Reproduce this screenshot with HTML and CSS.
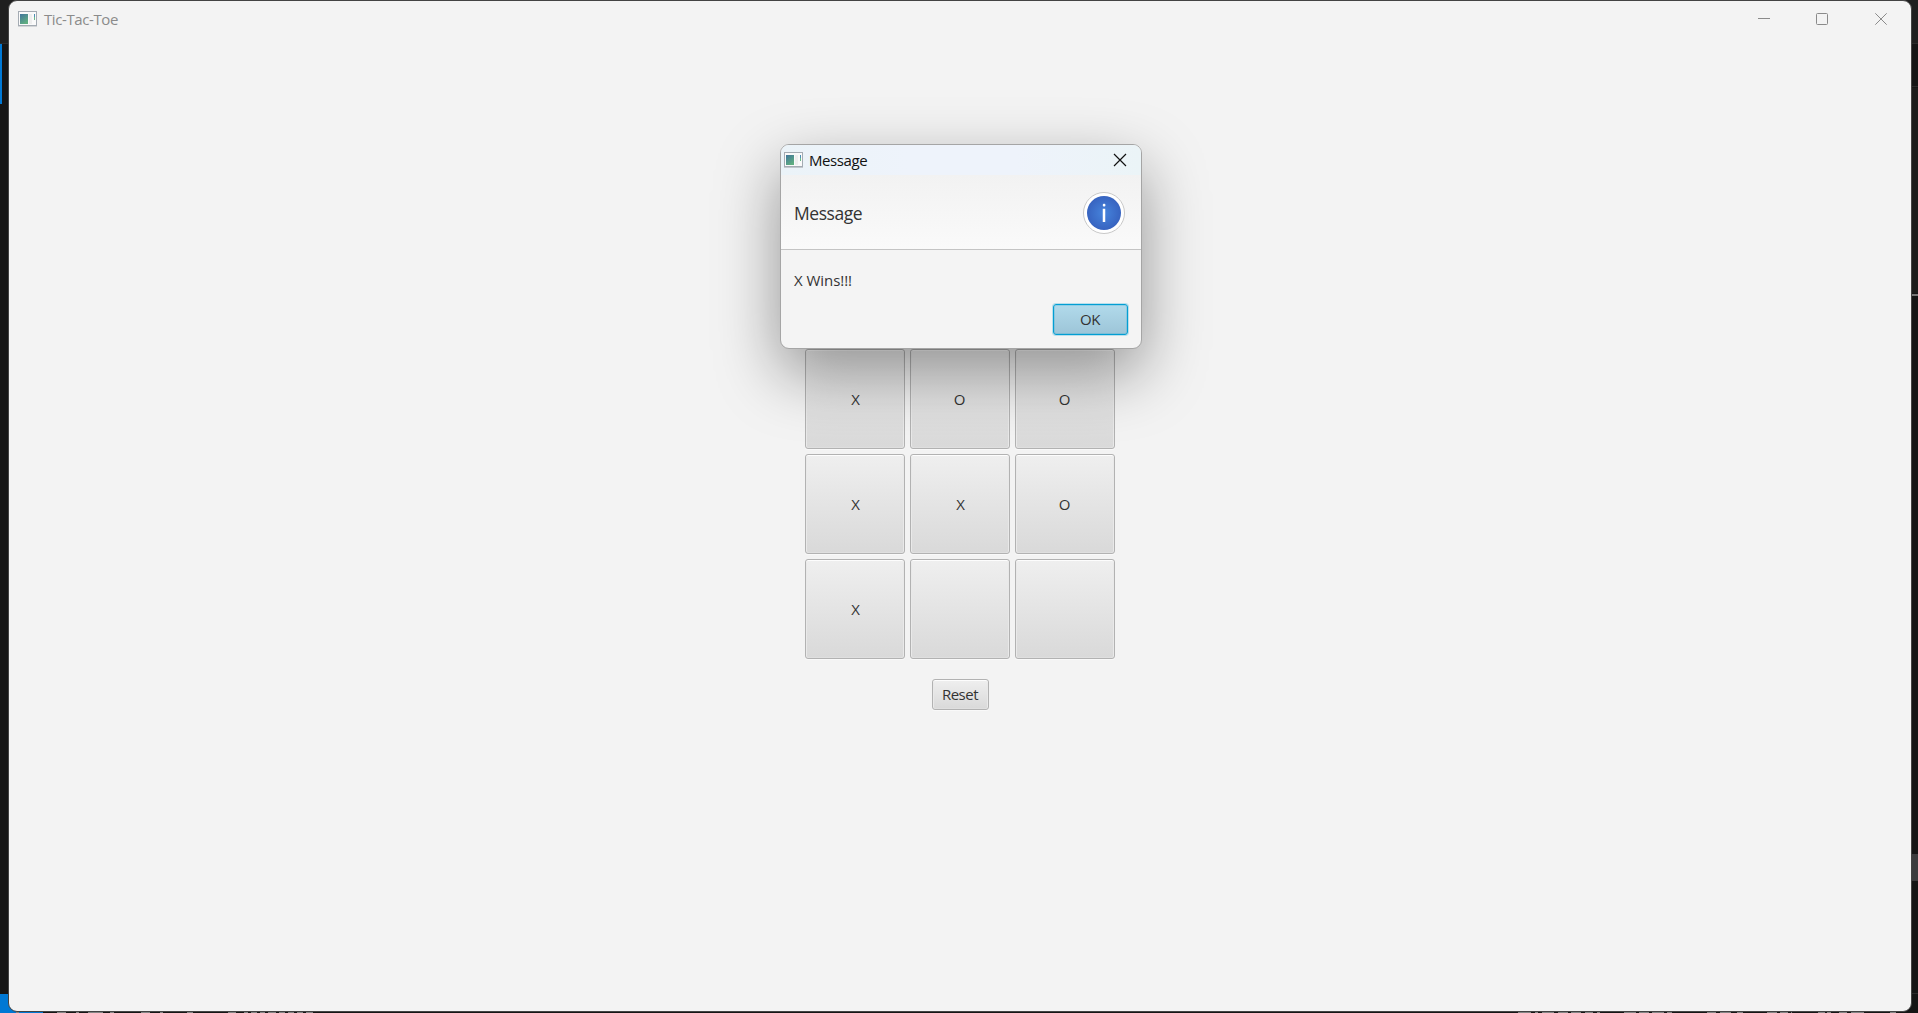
FILE: index.html
```html
<!DOCTYPE html>
<html lang="en">
<head>
<meta charset="utf-8">
<title>Tic-Tac-Toe</title>
<link rel="stylesheet" href="styles.css">
</head>
<body>
<svg class="backdrop" width="1918" height="1013" viewBox="0 0 1918 1013" aria-hidden="true">
  <rect width="1918" height="1013" fill="#151515"/>
  <rect width="1918" height="43" fill="#1f1f1f"/>
  <path d="M0 43.5H1918M1900 86.500H1918M1900 993.500H1918" stroke="#2b2b2b"/>
  <rect y="44" width="2" height="60" fill="#0078d4"/>
  <rect x="1905" y="88" width="13" height="205" fill="#1c1c1b"/>
  <rect x="1905" y="294" width="13" height="2" fill="#777"/>
  <rect x="1905" y="854" width="13" height="27" fill="#3b3b3d"/>
  <rect y="994" width="43" height="19" fill="#0078d4"/>
  <path d="M16 1012h3M57 1012h9M76 1012h3M88 1012h15M110 1012h4M141 1012h9M160 1012h3M187 1012h6M228 1012h8M244 1012h4m3 0h6m3 0h5m3 0h8m3 0h6m3 0h6m3 0h6m3 0h7M1518 1012h13m4 0h3m4 0h12m4 0h10m3 0h10m4 0h8m4 0h3M1624 1012h12m3 0h10m3 0h12m3 0h5M1707 1012h9m4 0h11m6 0h6M1767 1012h10m3 0h8m3 0h1M1818 1012h7m2 0h4m8 0h8m4 0h13M1890 1012h6" stroke="#858585" stroke-width="2"/>
</svg>

<main class="window">
  <header class="titlebar">
    <svg class="app-icon" width="19" height="16" viewBox="0 0 19 16">
      <defs><linearGradient id="pane" x2=".6" y2="1"><stop stop-color="#40759c"/><stop offset="1" stop-color="#60ae80"/></linearGradient></defs>
      <rect x=".5" y=".5" width="18" height="14" fill="#fafafa" stroke="#a4abb3"/>
      <path d="M0 15.500H19" stroke="#d3d5d7"/>
      <rect x="2" y="3" width="8" height="10" fill="url(#pane)"/>
      <rect x="11" y="3" width="3" height="10" fill="#eeeeee"/>
      <path d="M16.500 3V6" stroke="#4d8fb4"/><path d="M16.500 6V9" stroke="#6ab989"/>
    </svg>
    <span class="title">Tic-Tac-Toe</span>
    <svg class="controls" width="130" height="14" viewBox="0 0 130 14" fill="none" stroke="#8a8a8a">
      <path d="M0 6.500H12"/>
      <rect x="58.500" y="1.500" width="11" height="11" rx="1"/>
      <path d="M117.300 1.300L128.700 12.700M128.700 1.300L117.300 12.700"/>
    </svg>
  </header>
  <section class="game">
    <div class="board">
      <button class="btn cell x">X</button><button class="btn cell">O</button><button class="btn cell">O</button>
      <button class="btn cell x">X</button><button class="btn cell x">X</button><button class="btn cell">O</button>
      <button class="btn cell x">X</button><button class="btn cell"></button><button class="btn cell"></button>
    </div>
    <button class="btn reset"><span>Reset</span></button>
  </section>
</main>

<div class="dialog" role="dialog">
  <header class="dialog-bar">
    <svg class="app-icon" width="19" height="16" viewBox="0 0 19 16">
      <rect x=".5" y=".5" width="18" height="14" fill="#fafafa" stroke="#a4abb3"/>
      <path d="M0 15.500H19" stroke="#c3c8cd"/>
      <rect x="2" y="3" width="8" height="10" fill="url(#pane)"/>
      <rect x="11" y="3" width="3" height="10" fill="#eeeeee"/>
      <path d="M16.500 3V6" stroke="#4d8fb4"/><path d="M16.500 6V9" stroke="#6ab989"/>
    </svg>
    <span class="dialog-title">Message</span>
    <svg class="close" width="14" height="14" viewBox="0 0 14 14"><path d="M1 1L13 13M13 1L1 13" stroke="#111" stroke-width="1.200"/></svg>
  </header>
  <div class="dialog-header">
    <span class="heading">Message</span>
    <svg class="info" width="42" height="42" viewBox="0 0 42 42">
      <defs><radialGradient id="blue"><stop stop-color="#4684dc"/><stop offset="1" stop-color="#3763c0"/></radialGradient></defs>
      <circle cx="21" cy="21" r="20.500" fill="#fff" stroke="#c8c8c8"/>
      <circle cx="21" cy="21" r="17" fill="url(#blue)"/>
      <rect x="19.800" y="11.800" width="2.600" height="2.800" rx="1" fill="#fff"/>
      <path d="M21 16.800V30" stroke="#fff" stroke-width="2.500"/>
    </svg>
  </div>
  <div class="dialog-body">
    <span class="message">X Wins!!!</span>
    <button class="ok"><span>OK</span></button>
  </div>
</div>
</body>
</html>
```
FILE: styles.css
```css
* { box-sizing: border-box; }

body {
  margin: 0;
  height: 1013px;
  overflow: hidden;
  background: #151515;
  font-family: "Open Sans", "Noto Sans", sans-serif;
  font-size: 15px;
  color: #333;
}

svg { display: block; flex: none; }
button { font: inherit; color: inherit; padding: 0; margin: 0; }

.backdrop { position: absolute; inset: 0; }

.window {
  position: relative;
  width: 1904px;
  height: 1012px;
  margin: 0 0 0 8px;
  border: 1px solid #434343;
  border-radius: 9px;
  background: #f3f3f3;
}

.titlebar {
  display: flex;
  align-items: center;
  height: 36px;
  padding: 0 23px 0 9px;
  color: #8b8b8b;
}
.title { margin-left: 7px; letter-spacing: -0.4px; }
.controls { margin-left: auto; }

.game {
  display: flex;
  flex-direction: column;
  align-items: center;
  gap: 20px;
  padding-top: 312px;
}
.board {
  display: grid;
  grid-template-columns: repeat(3, 100px);
  grid-auto-rows: 100px;
  gap: 5px;
}
.btn {
  border: 1px solid #b2b2b2;
  border-radius: 3px;
  background: linear-gradient(#efefef, #d9d9d9);
  box-shadow: inset 0 1px #fdfdfd, inset 1px 0 #e9e9e9, inset -1px 0 #e9e9e9, inset 0 -1px #dfdfdf, 0 1px #f9f9f9;
}
.cell { padding: 0 1px 1px 0; }
.cell.x { padding: 0 0 1px 1px; }
.reset { width: 57px; height: 31px; margin-left: 1px; padding: 0 1px 2px 0; letter-spacing: -0.5px; }

.dialog {
  position: absolute;
  left: 780px;
  top: 144px;
  width: 362px;
  height: 205px;
  border: 1px solid #a5a5a5;
  border-radius: 9px;
  background: #f4f4f4;
  overflow: hidden;
  box-shadow: 0 24px 64px rgba(0, 0, 0, 0.4);
}
.dialog-bar {
  display: flex;
  align-items: center;
  height: 30px;
  padding: 0 14px 0 3px;
  background: linear-gradient(90deg, #ebf3f8, #eef3fb 35%, #eef3fb 65%, #ebf4f7);
  color: #111;
}
.dialog-title { margin-left: 6px; letter-spacing: -0.4px; }
.close { margin-left: auto; }
.dialog-header {
  display: flex;
  align-items: center;
  justify-content: space-between;
  height: 75px;
  padding: 1px 16px 0 13px;
  border-bottom: 1px solid #c4c4c4;
  background: linear-gradient(#f2f2f2, #fafafa);
}
.heading { padding-top: 1px; font-size: 17.5px; letter-spacing: -0.45px; }
.dialog-body {
  display: flex;
  flex-direction: column;
  padding: 19px 13px 0;
}
.message { line-height: 22px; letter-spacing: -0.05px; }
.ok {
  align-self: flex-end;
  width: 75px;
  height: 31px;
  margin-top: 13px;
  padding: 0 1px 2px 0;
  border: 1px solid #039ed3;
  border-radius: 3px;
  background: linear-gradient(#b1daeb, #9dc5d8);
  box-shadow: 0 0 0 1px rgba(3, 158, 211, 0.25), inset 0 0 0 1px rgba(3, 158, 211, 0.2);
  letter-spacing: -0.4px;
}
```
